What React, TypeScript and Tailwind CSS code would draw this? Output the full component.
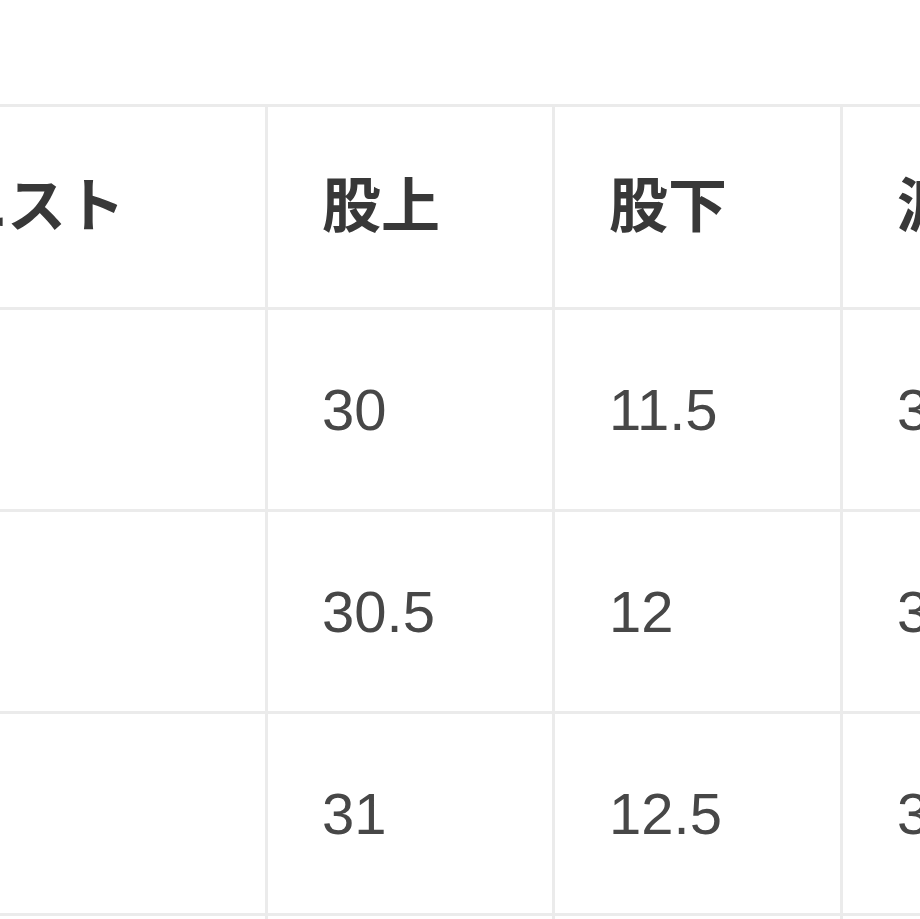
const headers = ['ウエスト', '股上', '股下', '渡り幅', '裾幅']

const rows = [
  ['64', '30', '11.5', '32', '27'],
  ['68', '30.5', '12', '33', '28'],
  ['72', '31', '12.5', '34', '29'],
  ['76', '31.5', '13', '35', '30'],
]

export default function App() {
  return (
    <div className="w-[920px] h-[919px] overflow-hidden bg-white">
      <div className="pt-[104px] ml-[-168px] w-[1620px]">
        <table
          className="w-[1584px] table-fixed border-collapse"
          style={{ fontFamily: '"Liberation Sans", "Noto Sans CJK JP", sans-serif' }}
        >
          <colgroup>
            <col className="w-[433px]" />
            <col className="w-[287px]" />
            <col className="w-[288px]" />
            <col className="w-[288px]" />
            <col className="w-[288px]" />
          </colgroup>
          <thead>
            <tr>
              {headers.map((h) => (
                <th
                  key={h}
                  className="h-[203px] border-[3px] border-[#ebebeb] pl-[54px] text-left align-middle text-[59px] font-bold text-[#383838] whitespace-nowrap"
                >
                  {h}
                </th>
              ))}
            </tr>
          </thead>
          <tbody>
            {rows.map((r, i) => (
              <tr key={i}>
                {r.map((v, j) => (
                  <td
                    key={j}
                    className="h-[202px] border-[3px] border-[#ebebeb] pl-[54px] text-left align-middle text-[58px] text-[#474747] whitespace-nowrap"
                  >
                    {v}
                  </td>
                ))}
              </tr>
            ))}
          </tbody>
        </table>
      </div>
    </div>
  )
}
